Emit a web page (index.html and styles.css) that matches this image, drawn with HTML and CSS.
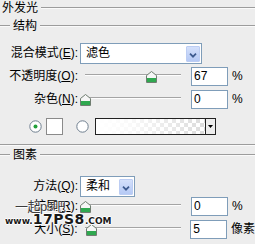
FILE: index.html
```html
<!DOCTYPE html>
<html>
<head>
<meta charset="utf-8">
<link rel="stylesheet" href="styles.css">
</head>
<body>
<div class="panel">
  <div class="legend title"><span class="lt">外发光</span></div>
  <div class="legend group"><span class="lead"></span><span class="lt">结构</span></div>

  <div class="row r-blend">
    <span class="lbl lbl-tall">混合模式(<u>E</u>):</span>
    <div class="select wide"><span class="val">滤色</span><span class="btn"><svg width="14" height="16" viewBox="0 0 14 16"><path d="M3.5 6.5 L7 10 L10.5 6.5" fill="none" stroke="#3d5a8f" stroke-width="2"/></svg></span></div>
  </div>

  <div class="row num-row">
    <span class="lbl">不透明度(<u>O</u>):</span>
    <div class="slider"><div class="track"></div><svg class="thumb t-opacity" width="11" height="12" viewBox="0 0 11 12"><path d="M5.5 0.5 L10.5 4.5 L10.5 11.5 L0.5 11.5 L0.5 4.5 Z" fill="#f6f6f6" stroke="#6f7d70"/><rect x="1" y="7" width="9" height="4" fill="#2fa84f"/></svg></div>
    <div class="num">67</div><span class="unit">%</span>
  </div>

  <div class="row num-row">
    <span class="lbl">杂色(<u>N</u>):</span>
    <div class="slider"><div class="track"></div><svg class="thumb t-zero" width="11" height="12" viewBox="0 0 11 12"><path d="M5.5 0.5 L10.5 4.5 L10.5 11.5 L0.5 11.5 L0.5 4.5 Z" fill="#f6f6f6" stroke="#6f7d70"/><rect x="1" y="7" width="9" height="4" fill="#2fa84f"/></svg></div>
    <div class="num">0</div><span class="unit">%</span>
  </div>

  <div class="row r-color">
    <svg class="radio r1" width="13" height="13" viewBox="0 0 13 13"><circle cx="6.5" cy="6.5" r="5.7" fill="#fff" stroke="#6f7f8f"/><circle cx="6.5" cy="6.5" r="2" fill="#22a03a"/></svg>
    <div class="swatch"></div>
    <svg class="radio r2" width="13" height="13" viewBox="0 0 13 13"><circle cx="6.5" cy="6.5" r="5.7" fill="#fff" stroke="#6f7f8f"/></svg>
    <div class="gradient"><div class="grad-fill"></div><div class="grad-btn"><svg width="9" height="15" viewBox="0 0 9 15"><path d="M2 6 L7 6 L4.5 9 Z" fill="#000"/></svg></div></div>
  </div>

  <div class="sep"></div>
  <div class="legend group g2"><span class="lead"></span><span class="lt">图素</span></div>

  <div class="row r-method">
    <span class="lbl lbl-tall">方法(<u>Q</u>):</span>
    <div class="select narrow"><span class="val">柔和</span><span class="btn"><svg width="14" height="16" viewBox="0 0 14 16"><path d="M3.5 6.5 L7 10 L10.5 6.5" fill="none" stroke="#3d5a8f" stroke-width="2"/></svg></span></div>
  </div>

  <div class="row num-row">
    <span class="lbl">扩展(<u>R</u>):</span>
    <div class="slider"><div class="track"></div><svg class="thumb t-zero" width="11" height="12" viewBox="0 0 11 12"><path d="M5.5 0.5 L10.5 4.5 L10.5 11.5 L0.5 11.5 L0.5 4.5 Z" fill="#f6f6f6" stroke="#6f7d70"/><rect x="1" y="7" width="9" height="4" fill="#2fa84f"/></svg></div>
    <div class="num">0</div><span class="unit">%</span>
  </div>

  <div class="row num-row">
    <span class="lbl">大小(<u>S</u>):</span>
    <div class="slider"><div class="track"></div><svg class="thumb t-size" width="11" height="12" viewBox="0 0 11 12"><path d="M5.5 0.5 L10.5 4.5 L10.5 11.5 L0.5 11.5 L0.5 4.5 Z" fill="#f6f6f6" stroke="#6f7d70"/><rect x="1" y="7" width="9" height="4" fill="#2fa84f"/></svg></div>
    <div class="num">5</div><span class="unit">像素</span>
  </div>

  <div class="wm1">一起ps吧</div>
  <div class="wm2"><span class="s">www.</span><span class="b">17PS8</span><span class="s">.COM</span></div>
</div>
</body>
</html>
```

FILE: styles.css
```css
* { box-sizing: border-box; }
html, body { margin: 0; padding: 0; background: #ededed; }
body {
  font-family: "Liberation Sans", "Noto Sans CJK SC", sans-serif;
  font-size: 12px;
  color: #000;
}
.panel {
  width: 255px;
  height: 244px;
  overflow: hidden;
  position: relative;
}
u { text-decoration: underline; }

.legend {
  display: flex;
  align-items: center;
  height: 14px;
  line-height: 14px;
  white-space: nowrap;
}
.legend::after {
  content: "";
  flex: 1;
  border-top: 1px solid #9c9c9c;
  border-bottom: 1px solid #fafafa;
}
.title { height: 15px; padding-left: 2px; }
.title .lt { margin-right: 3px; }
.group { margin-top: 4px; }
.lead {
  width: 10px;
  border-top: 1px solid #9c9c9c;
  border-bottom: 1px solid #fafafa;
  margin-right: 3px;
}
.group .lt { margin-right: 3px; }
.g2 { margin-top: 2px; }

.row { display: flex; align-items: flex-start; }
.lbl {
  width: 78px;
  text-align: right;
  line-height: 19px;
  white-space: nowrap;
}
.lbl-tall { line-height: 21px; }
.r-blend { margin-top: 10px; height: 24px; }
.r-method { margin-top: 14px; height: 21px; }

.select {
  margin-left: 2px;
  height: 21px;
  border: 1px solid #7f9db9;
  background: #fff;
  display: flex;
  align-items: center;
  justify-content: space-between;
  padding: 0 1px 0 5px;
}
.select.wide { width: 122px; }
.select.narrow { width: 55px; }
.val { line-height: 19px; }
.btn {
  width: 14px;
  height: 16px;
  background: linear-gradient(#d4e0fb, #b5c9f5);
  border: 1px solid #bccdf3;
  border-radius: 1px;
  display: flex;
}

.num-row { height: 23px; }
.slider {
  margin-left: 2px;
  width: 102px;
  height: 19px;
  position: relative;
}
.track {
  margin-top: 7px;
  margin-left: 5px;
  width: 96px;
  height: 2px;
  border-top: 1px solid #a4a4a4;
  border-bottom: 1px solid #fdfdfd;
}
.thumb { position: absolute; top: 4px; left: 0; }
.t-opacity { left: 66px; }
.t-size { left: 6px; }
.num {
  margin-left: 9px;
  width: 37px;
  height: 19px;
  border: 1px solid #7f9db9;
  background: #fff;
  padding-left: 2px;
  line-height: 17px;
}
.unit { margin-left: 4px; line-height: 19px; white-space: nowrap; }

.r-color { height: 26px; align-items: center; }
.radio { display: block; }
.r1 { margin-left: 29px; }
.swatch {
  margin-left: 4px;
  width: 17px;
  height: 17px;
  background: #fff;
  border: 1px solid #8a8a8a;
}
.r2 { margin-left: 13px; }
.gradient {
  margin-left: 6px;
  width: 121px;
  height: 17px;
  border: 1px solid #222;
  display: flex;
  background-color: #fff;
  background-image:
    linear-gradient(45deg, #dcdcdc 25%, transparent 25%, transparent 75%, #dcdcdc 75%),
    linear-gradient(45deg, #dcdcdc 25%, transparent 25%, transparent 75%, #dcdcdc 75%);
  background-size: 8px 8px;
  background-position: 0 0, 4px 4px;
}
.grad-fill {
  flex: 1;
  background: linear-gradient(to right, #fff 0%, rgba(255,255,255,0.85) 30%, rgba(255,255,255,0) 100%);
}
.grad-btn {
  width: 10px;
  border-left: 1px solid #222;
  background: #ededed;
  display: flex;
}

.sep {
  margin-top: 5px;
  border-top: 1px solid #9c9c9c;
  border-bottom: 1px solid #fafafa;
}

.wm1 {
  position: absolute;
  left: 15px;
  top: 200px;
  font-size: 13px;
  line-height: 14px;
  color: #3c3c3c;
  text-shadow: 0 0 1px #fff, 1px 1px 0 #fff;
  letter-spacing: -0.5px;
}
.wm2 {
  position: absolute;
  left: 5px;
  top: 212px;
  font-family: "DejaVu Sans", sans-serif;
  font-weight: bold;
  color: #1a1a1a;
  line-height: 14px;
  text-shadow: 1px 0 0 #fff, -1px 0 0 #fff, 0 1px 0 #fff, 0 -1px 0 #fff;
  white-space: nowrap;
}
.wm2 .s { font-size: 9px; }
.wm2 .b { font-size: 14px; letter-spacing: 0.5px; }
```
